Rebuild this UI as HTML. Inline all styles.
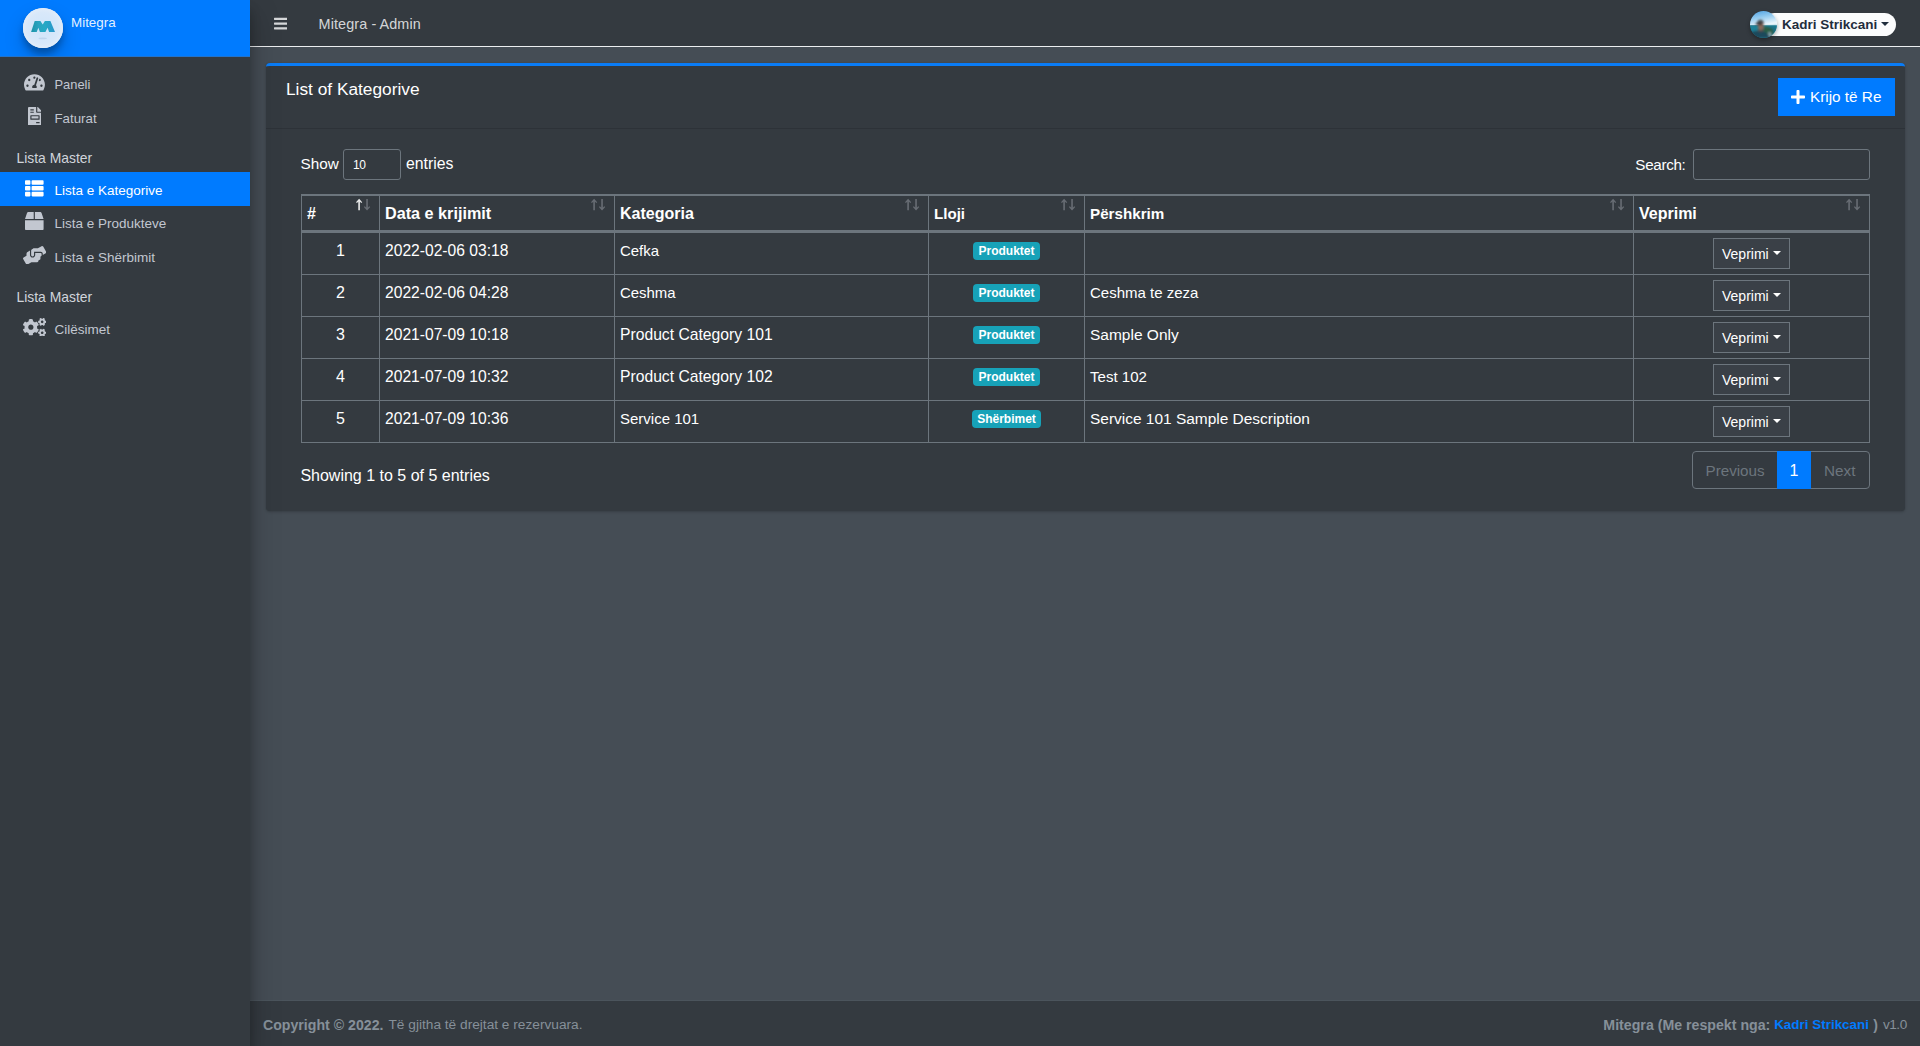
<!DOCTYPE html>
<html lang="en">
<head>
<meta charset="utf-8">
<title>Mitegra - Admin</title>
<style>
*{box-sizing:border-box;margin:0;padding:0}
html,body{width:1920px;height:1046px;overflow:hidden}
body{font-family:"Liberation Sans",sans-serif;background:#454d55;color:#fff;font-size:16px;position:relative}
svg{display:block}
.abs{position:absolute}
/* ---------- sidebar ---------- */
#sidebar{position:absolute;left:0;top:0;width:250px;height:1046px;background:#343a40;box-shadow:0 14px 28px rgba(0,0,0,.25),0 10px 10px rgba(0,0,0,.22);z-index:5}
#brand{position:absolute;left:0;top:0;width:250px;height:57px;background:#007bff;overflow:hidden;border-bottom:1px solid #2273cc}
#logo{position:absolute;left:23px;top:8px;width:40px;height:40px;border-radius:50%;background:#dfeaf6;box-shadow:0 10px 20px rgba(0,0,0,.19),0 6px 6px rgba(0,0,0,.23);overflow:hidden}
#brandtxt{position:absolute;left:71px;top:14.4px;font-size:13.4px;line-height:18px;color:rgba(255,255,255,.9);white-space:nowrap}
.nav{position:absolute;left:0;width:250px;height:34px;color:#c2c7d0;font-size:13.5px;line-height:34px;white-space:nowrap}
.nav .ic{position:absolute;left:22px;top:5.85px;width:25px;height:18.6px;display:flex;align-items:center;justify-content:center}
.nav .ic svg{fill:#c2c7d0}
.nav .tx{position:absolute;left:54.5px;top:0}
.nav.active{background:#007bff;color:#fff}
.nav.active .ic svg{fill:#fff}
.navh{position:absolute;left:16.5px;color:#d0d4db;font-size:13.9px;line-height:20px;white-space:nowrap}
/* ---------- navbar ---------- */
#navbar{position:absolute;left:250px;top:0;width:1670px;height:47px;background:#343a40;border-bottom:1px solid #eceef0;z-index:2}
#bars{position:absolute;left:23.7px;top:15.9px}
#navtitle{position:absolute;left:68.6px;top:14.3px;letter-spacing:0.1px;font-size:14.4px;line-height:20px;color:rgba(255,255,255,.8);white-space:nowrap}
#userpill{position:absolute;left:1513px;top:13px;width:133px;height:23px;border-radius:12px;background:#fbfcfd}
#avatar{position:absolute;left:1500px;top:11px;width:27px;height:27px;border-radius:50%;overflow:hidden;box-shadow:0 2px 4px rgba(0,0,0,.35)}
#username{position:absolute;left:1532px;top:14.5px;font-size:13.5px;line-height:20px;font-weight:bold;color:#1f2d3d;white-space:nowrap}
#usercaret{position:absolute;left:1631px;top:22px;width:0;height:0;border-left:4px solid transparent;border-right:4px solid transparent;border-top:4px solid #1f2d3d}
/* ---------- card ---------- */
#card{position:absolute;left:266px;top:63px;width:1639px;height:448px;background:#343a40;border-top:3px solid #0a7cf6;border-radius:4px;box-shadow:0 0 1px rgba(0,0,0,.125),0 1px 3px rgba(0,0,0,.2)}
#cardhead{position:absolute;left:0;top:0;width:1639px;height:63px;border-bottom:1px solid rgba(0,0,0,.125)}
#cardtitle{position:absolute;left:20px;top:11.4px;font-size:17.3px;line-height:24px;white-space:nowrap}
#btnnew{position:absolute;left:1512px;top:12px;width:117px;height:38px;background:#007bff;border:1px solid #007bff;color:#fff;font-size:16px;line-height:36px;white-space:nowrap}
#btnnew svg{position:absolute;left:12px;top:10px;fill:#fff}
#btnnew span{position:absolute;left:31px;top:-0.2px;font-size:15.3px}
/* ---------- table controls ---------- */
.lbl{position:absolute;font-size:16px;line-height:24px;white-space:nowrap;color:#fff}
.inp{position:absolute;height:31px;border:1px solid #6c757d;border-radius:3px;background:#343a40}
/* ---------- table ---------- */
#tbl{position:absolute;left:301px;top:194px;width:1569px;height:249px;border:1px solid #6c757d;border-right:0;border-collapse:separate;border-spacing:0;table-layout:fixed;font-size:16px;line-height:24px;color:#fff}
#tbl th,#tbl td{border:1px solid #6c757d;border-left:0;border-bottom:0;padding:5px;vertical-align:top;text-align:left;white-space:nowrap;overflow:hidden;position:relative}
#tbl th{border-bottom:2px solid #6c757d;font-weight:bold;vertical-align:bottom;height:37px;padding-top:6px;padding-bottom:4px}
#tbl td{height:42px;padding-top:6px;padding-bottom:4px}
#tbl td.b{padding-top:4.8px}
#tbl td.a{padding-top:5px}
#tbl .c{text-align:center}
.badge{display:inline-block;background:#17a2b8;color:#fff;font-weight:bold;font-size:12px;line-height:12px;padding:3px 5px;border-radius:4px;vertical-align:baseline}
.act{display:inline-block;width:77px;height:31px;border:1px solid #6c757d;background:#3a4047;color:#fff;font-size:14px;line-height:31px;text-align:left;padding-left:8px;position:relative;vertical-align:top}
.act i{position:absolute;left:59px;top:12.4px;width:0;height:0;border-left:4px solid transparent;border-right:4px solid transparent;border-top:4px solid #fff}
.srt{position:absolute;top:2px;right:8px;width:16px;height:14px}
/* ---------- pagination ---------- */
#pag{position:absolute;left:1692px;top:451px;width:178px;height:38px;border:1px solid #6c757d;border-radius:4px;font-size:16px;line-height:36px;color:#6c757d}
#pag .cur{position:absolute;left:84px;top:-1px;width:34px;height:38px;background:#007bff;color:#fff;text-align:center;line-height:40px}
/* ---------- footer ---------- */
#footer{position:absolute;left:250px;top:1000px;width:1670px;height:46px;background:#343a40;border-top:1px solid #4b545c;color:#869099;font-size:14px;line-height:20px}
#footer a{color:#007bff;text-decoration:none;font-weight:bold}
#fl{position:absolute;left:13px;top:14px;white-space:nowrap}
#fr{position:absolute;right:13px;top:14px;white-space:nowrap}
</style>
</head>
<body>

<!-- SIDEBAR -->
<div id="sidebar">
  <div id="brand">
    <div id="logo"><svg width="40" height="40" viewBox="0 0 40 40">
<defs><radialGradient id="lg0" cx="50%" cy="50%" r="55%"><stop offset="0" stop-color="#d0e5fa"/><stop offset="0.7" stop-color="#d8e8fa"/><stop offset="1" stop-color="#e6eef8"/></radialGradient>
<linearGradient id="lg1" x1="0" y1="0" x2="1" y2="0"><stop offset="0" stop-color="#1c93a8"/><stop offset="0.3" stop-color="#2aa3bf"/><stop offset="0.55" stop-color="#27a9c4"/><stop offset="1" stop-color="#2a96cc"/></linearGradient>
<filter id="lb" x="-10%" y="-10%" width="120%" height="120%"><feGaussianBlur stdDeviation="0.35"/></filter>
<filter id="lb2" x="-30%" y="-200%" width="160%" height="500%"><feGaussianBlur stdDeviation="0.7"/></filter></defs>
<rect width="40" height="40" fill="url(#lg0)"/>
<ellipse cx="19.7" cy="30.4" rx="4.2" ry="0.8" fill="#a9c6e4" fill-opacity="0.5" filter="url(#lb2)"/>
<path filter="url(#lb)" fill="url(#lg1)" d="M8.1 23.9 L11.7 13 L17.4 13 L19.7 16.4 L21.9 13 L27.4 13 L32 23.9 L26.1 23.900 L24.600 19.700 L22.400 23.900 L16.900 23.900 L15.400 19.700 L13.700 23.900 Z"/>
</svg></div>
    <div id="brandtxt">Mitegra</div>
  </div>
  <div class="nav" style="top:67px"><span class="ic" style="top:5.7px"><svg width="20.93" height="18.6" viewBox="0 0 576 512"><path d="M288 32C128.94 32 0 160.94 0 320c0 52.8 14.25 102.26 39.06 144.8 5.61 9.62 16.3 15.2 27.44 15.2h443c11.14 0 21.83-5.58 27.44-15.2C561.75 422.26 576 372.8 576 320c0-159.06-128.94-288-288-288zm0 64c14.71 0 26.58 10.13 30.32 23.65-1.11 2.26-2.64 4.23-3.45 6.67l-9.22 27.67c-5.13 3.49-10.97 6.01-17.64 6.01-17.67 0-32-14.33-32-32S270.33 96 288 96zM96 384c-17.67 0-32-14.33-32-32s14.33-32 32-32 32 14.33 32 32-14.33 32-32 32zm48-160c-17.67 0-32-14.33-32-32s14.33-32 32-32 32 14.33 32 32-14.33 32-32 32zm246.77-72.41l-61.33 184C343.13 347.33 352 364.54 352 384c0 11.72-3.38 22.55-8.88 32H232.88c-5.5-9.45-8.88-20.28-8.88-32 0-33.94 26.5-61.43 59.9-63.59l61.34-184.01c4.17-12.56 17.73-19.45 30.36-15.17 12.57 4.19 19.35 17.79 15.17 30.36zm14.66 57.2l15.52-46.55c3.47-1.29 7.13-2.23 11.05-2.23 17.67 0 32 14.33 32 32s-14.33 32-32 32c-11.38-.01-20.89-6.28-26.57-15.22zM480 384c-17.67 0-32-14.33-32-32s14.33-32 32-32 32 14.33 32 32-14.33 32-32 32z"/></svg></span><span class="tx" style="font-size:12.9px;top:0.5px">Paneli</span></div>
  <div class="nav" style="top:101px"><span class="ic" style="top:5.7px"><svg width="13.95" height="18.6" viewBox="0 0 384 512"><path d="M288 256H96v64h192v-64zm89-151L279.1 7c-4.5-4.5-10.6-7-17-7H256v128h128v-6.1c0-6.3-2.5-12.4-7-16.9zm-153 31V0H24C10.7 0 0 10.7 0 24v464c0 13.3 10.7 24 24 24h336c13.3 0 24-10.7 24-24V160H248c-13.2 0-24-10.8-24-24zM64 72c0-4.42 3.58-8 8-8h80c4.42 0 8 3.58 8 8v16c0 4.42-3.58 8-8 8H72c-4.42 0-8-3.58-8-8V72zm0 64c0-4.42 3.58-8 8-8h80c4.42 0 8 3.58 8 8v16c0 4.42-3.58 8-8 8H72c-4.42 0-8-3.58-8-8v-16zm256 304c0 4.42-3.58 8-8 8h-80c-4.42 0-8-3.58-8-8v-16c0-4.42 3.58-8 8-8h80c4.42 0 8 3.58 8 8v16zm0-200v96c0 8.84-7.16 16-16 16H80c-8.84 0-16-7.16-16-16v-96c0-8.84 7.16-16 16-16h224c8.84 0 16 7.16 16 16z"/></svg></span><span class="tx" style="font-size:13.3px;top:0.5px">Faturat</span></div>
  <div class="navh" style="top:148px">Lista Master</div>
  <div class="nav active" style="top:172px"><span class="ic" style="top:6.8px"><svg width="18.6" height="18.6" viewBox="0 0 512 512"><path d="M149.333 216v80c0 13.255-10.745 24-24 24H24c-13.255 0-24-10.745-24-24v-80c0-13.255 10.745-24 24-24h101.333c13.255 0 24 10.745 24 24zM0 376v80c0 13.255 10.745 24 24 24h101.333c13.255 0 24-10.745 24-24v-80c0-13.255-10.745-24-24-24H24c-13.255 0-24 10.745-24 24zM125.333 32H24C10.745 32 0 42.745 0 56v80c0 13.255 10.745 24 24 24h101.333c13.255 0 24-10.745 24-24V56c0-13.255-10.745-24-24-24zm80 448H488c13.255 0 24-10.745 24-24v-80c0-13.255-10.745-24-24-24H205.333c-13.255 0-24 10.745-24 24v80c0 13.255 10.745 24 24 24zm-24-424v80c0 13.255 10.745 24 24 24H488c13.255 0 24-10.745 24-24V56c0-13.255-10.745-24-24-24H205.333c-13.255 0-24 10.745-24 24zm24 264H488c13.255 0 24-10.745 24-24v-80c0-13.255-10.745-24-24-24H205.333c-13.255 0-24 10.745-24 24v80c0 13.255 10.745 24 24 24z"/></svg></span><span class="tx" style="top:1.5px">Lista e Kategorive</span></div>
  <div class="nav" style="top:206px"><span class="ic" style="top:5.55px"><svg width="18.6" height="18.6" viewBox="0 0 512 512"><path d="M509.5 184.6L458.9 32.8C452.4 13.2 434.1 0 413.4 0H272v192h238.7c-.4-2.5-.4-5-1.2-7.4zM240 0H98.6c-20.7 0-39 13.2-45.5 32.8L2.5 184.6c-.8 2.4-.8 4.9-1.2 7.4H240V0zM0 224v240c0 26.5 21.5 48 48 48h416c26.5 0 48-21.5 48-48V224H0z"/></svg></span><span class="tx" style="top:0.6px">Lista e Produkteve</span></div>
  <div class="nav" style="top:240px"><span class="ic" style="top:5.9px"><svg width="23.25" height="18.6" viewBox="0 0 640 512"><path d="M488 192H336v56c0 39.7-32.3 72-72 72s-72-32.3-72-72V126.400l-64.900 39C107.800 176.900 96 197.800 96 220.200v47.300l-80 46.200C.7 322.500-4.600 342.100 4.300 357.400l80 138.600c8.800 15.300 28.400 20.500 43.700 11.700L231.400 448H368c35.300 0 64-28.700 64-64h16c17.700 0 32-14.300 32-32v-64h8c13.300 0 24-10.700 24-24v-48c0-13.300-10.700-24-24-24zm147.700-37.400L555.700 16C546.900.7 527.300-4.500 512 4.300L408.600 64H306.400c-12 0-23.700 3.400-33.900 9.700L239 94.600c-9.400 5.800-15 16.100-15 27.100V248c0 22.100 17.900 40 40 40s40-17.900 40-40v-88h184c30.900 0 56 25.100 56 56v28.500l80-46.200c15.300-8.900 20.500-28.400 11.700-43.700z"/></svg></span><span class="tx" style="top:0.5px">Lista e Shërbimit</span></div>
  <div class="navh" style="top:287px">Lista Master</div>
  <div class="nav" style="top:311px"><span class="ic" style="top:6.8px"><svg width="23.25" height="18.6" viewBox="0 0 640 512"><path d="M512.1 191l-8.2 14.300c-3 5.300-9.400 7.500-15.100 5.400-11.800-4.400-22.600-10.700-32.100-18.600-4.600-3.800-5.800-10.500-2.800-15.700l8.200-14.300c-6.900-8-12.300-17.300-15.900-27.400h-16.500c-6 0-11.200-4.300-12.200-10.300-2-12-2.100-24.600 0-37.100 1-6 6.200-10.400 12.200-10.400h16.500c3.600-10.100 9-19.400 15.900-27.400l-8.200-14.300c-3-5.200-1.900-11.900 2.800-15.700 9.500-7.900 20.400-14.200 32.100-18.600 5.700-2.100 12.100.1 15.100 5.400l8.200 14.300c10.500-1.900 21.200-1.900 31.700 0L552 6.300c3-5.300 9.400-7.500 15.100-5.400 11.800 4.400 22.600 10.700 32.100 18.600 4.600 3.800 5.800 10.500 2.800 15.700l-8.200 14.300c6.900 8 12.300 17.300 15.900 27.400h16.500c6 0 11.200 4.300 12.200 10.300 2 12 2.100 24.600 0 37.100-1 6-6.200 10.400-12.200 10.400h-16.500c-3.600 10.100-9 19.400-15.900 27.400l8.200 14.300c3 5.200 1.900 11.900-2.800 15.700-9.500 7.900-20.400 14.200-32.100 18.600-5.700 2.100-12.100-.1-15.100-5.400l-8.200-14.300c-10.400 1.900-21.200 1.900-31.700 0zm-10.500-58.800c38.500 29.600 82.400-14.300 52.800-52.800-38.500-29.700-82.400 14.300-52.800 52.800zM386.300 286.100l33.700 16.800c10.100 5.800 14.500 18.100 10.500 29.100-8.900 24.200-26.400 46.400-42.600 65.800-7.400 8.900-20.200 11.100-30.300 5.300l-29.100-16.800c-16 13.700-34.600 24.600-54.900 31.700v33.600c0 11.600-8.300 21.600-19.700 23.600-24.600 4.200-50.400 4.400-75.900 0-11.500-2-20-11.900-20-23.600V418c-20.300-7.200-38.900-18-54.900-31.700L74 403c-10 5.800-22.900 3.600-30.300-5.300-16.200-19.400-33.300-41.600-42.200-65.700-4-10.900.4-23.200 10.500-29.100l33.300-16.800c-3.900-20.900-3.900-42.400 0-63.400L12 205.800c-10.100-5.800-14.600-18.100-10.500-29 8.900-24.200 26-46.400 42.200-65.800 7.400-8.900 20.200-11.100 30.300-5.300l29.100 16.800c16-13.700 34.600-24.600 54.900-31.700V57.100c0-11.500 8.200-21.500 19.600-23.500 24.600-4.200 50.500-4.400 76-.1 11.500 2 20 11.900 20 23.600v33.600c20.300 7.200 38.900 18 54.900 31.700l29.100-16.800c10-5.800 22.900-3.600 30.300 5.300 16.200 19.400 33.200 41.600 42.100 65.800 4 10.900.1 23.200-10 29.100l-33.700 16.800c3.900 21 3.900 42.500 0 63.500zm-117.600 21.100c59.200-77-28.700-164.900-105.700-105.700-59.200 77 28.700 164.900 105.700 105.700zm243.400 182.700l-8.200 14.300c-3 5.300-9.400 7.500-15.100 5.400-11.800-4.400-22.600-10.700-32.100-18.600-4.600-3.800-5.800-10.500-2.800-15.700l8.200-14.300c-6.900-8-12.300-17.300-15.900-27.400h-16.500c-6 0-11.200-4.300-12.200-10.300-2-12-2.100-24.600 0-37.100 1-6 6.200-10.400 12.200-10.400h16.500c3.600-10.100 9-19.400 15.900-27.400l-8.200-14.300c-3-5.200-1.900-11.900 2.800-15.700 9.500-7.900 20.400-14.200 32.100-18.600 5.700-2.100 12.100.1 15.100 5.400l8.200 14.300c10.500-1.900 21.200-1.900 31.700 0l8.200-14.300c3-5.300 9.400-7.500 15.100-5.400 11.800 4.400 22.600 10.700 32.100 18.600 4.600 3.800 5.800 10.500 2.800 15.700l-8.200 14.300c6.900 8 12.300 17.300 15.900 27.400h16.500c6 0 11.200 4.300 12.200 10.300 2 12 2.100 24.600 0 37.100-1 6-6.200 10.400-12.200 10.400h-16.500c-3.600 10.100-9 19.400-15.900 27.400l8.200 14.300c3 5.200 1.900 11.900-2.800 15.700-9.500 7.900-20.400 14.200-32.100 18.600-5.700 2.100-12.100-.1-15.100-5.400l-8.200-14.300c-10.400 1.900-21.200 1.900-31.700 0zM501.600 431c38.500 29.600 82.400-14.300 52.800-52.800-38.500-29.600-82.400 14.300-52.800 52.800z"/></svg></span><span class="tx" style="top:1.7px">Cilësimet</span></div>
</div>

<!-- NAVBAR -->
<div id="navbar">
  <div id="bars"><svg width="13.39" height="15.3" viewBox="0 0 448 512" fill="#d5d7d9"><path d="M16 132h416c8.837 0 16-7.163 16-16V76c0-8.837-7.163-16-16-16H16C7.163 60 0 67.163 0 76v40c0 8.837 7.163 16 16 16zm0 160h416c8.837 0 16-7.163 16-16v-40c0-8.837-7.163-16-16-16H16c-8.837 0-16 7.163-16 16v40c0 8.837 7.163 16 16 16zm0 160h416c8.837 0 16-7.163 16-16v-40c0-8.837-7.163-16-16-16H16c-8.837 0-16 7.163-16 16v40c0 8.837 7.163 16 16 16z"/></svg></div>
  <div id="navtitle">Mitegra - Admin</div>
  <div id="userpill"></div>
  <div id="avatar"><svg width="27" height="27" viewBox="0 0 27 27">
<defs><linearGradient id="sky" x1="0" y1="0" x2="0.35" y2="1"><stop offset="0" stop-color="#4a9fe2"/><stop offset="0.5" stop-color="#93caef"/><stop offset="1" stop-color="#eaf5fb"/></linearGradient>
<filter id="ab" x="-20%" y="-20%" width="140%" height="140%"><feGaussianBlur stdDeviation="0.85"/></filter></defs>
<rect width="27" height="14.600" fill="url(#sky)"/>
<rect y="14.300" width="27" height="12.700" fill="#1d8198"/>
<g filter="url(#ab)">
<path d="M13 15.800 L27 14.800 L27 27 L13 27 Z" fill="#1b7288"/>
<path d="M13.500 15.800 C17 15 21 16.500 23.500 19 L23.500 24 L13.500 24 Z" fill="#2a5f46"/>
<path d="M0 27 L0 22 C3 20.200 6 19.600 9.500 19.800 C14.500 20.200 18.500 22.200 20.800 27 Z" fill="#1e485b"/>
<path d="M18 21.500 L20.500 20.800 L22 26 L19.500 26.500 Z" fill="#8aa5b0"/>
<ellipse cx="10.800" cy="15.200" rx="2.900" ry="4.300" fill="#876859"/>
<path d="M7 12.600 C6.500 7.300 14.200 7.300 14 12.600 C12 11.200 9 11.200 7 12.600 Z" fill="#3b474c"/>
<rect x="5.600" y="12.100" width="6.600" height="1.700" rx="0.700" fill="#1b1d26"/>
<path d="M8 17.500 C9 20.300 12.200 20.300 13.400 17.500 L13.400 20.400 L8 20.400 Z" fill="#5a4338"/>
</g>
</svg></div>
  <div id="username">Kadri Strikcani</div>
  <div id="usercaret"></div>
</div>

<!-- CARD -->
<div id="card">
  <div id="cardhead">
    <div id="cardtitle">List of Kategorive</div>
    <div id="btnnew"><svg width="14.0" height="16" viewBox="0 0 448 512"><path d="M416 208H272V64c0-17.67-14.33-32-32-32h-32c-17.670 0-32 14.330-32 32v144H32c-17.670 0-32 14.330-32 32v32c0 17.670 14.330 32 32 32h144v144c0 17.670 14.330 32 32 32h32c17.670 0 32-14.330 32-32V304h144c17.670 0 32-14.330 32-32v-32c0-17.670-14.330-32-32-32z"/></svg><span>Krijo të Re</span></div>
  </div>
</div>

<!-- CONTROLS -->
<div class="lbl" id="l-show" style="left:300.5px;top:151.5px;font-size:15.3px">Show</div>
<div class="inp" id="sel" style="left:343px;top:149px;width:58px"><span style="position:absolute;left:9px;top:0;font-size:12px;letter-spacing:-0.5px;line-height:30.5px;color:#fff">10</span></div>
<div class="lbl" id="l-entries" style="left:406px;top:151.5px;font-size:15.8px">entries</div>
<div class="lbl" id="l-search" style="left:1635.3px;top:152.6px;font-size:15.2px;letter-spacing:-0.3px">Search:</div>
<div class="inp" id="search" style="left:1693px;top:149px;width:177px"></div>

<!-- TABLE -->
<table id="tbl">
<colgroup><col style="width:78px"><col style="width:235px"><col style="width:314px"><col style="width:156px"><col style="width:549px"><col style="width:236px"></colgroup>
<thead><tr>
<th>#<svg class="srt" width="16" height="14" viewBox="0 0 16 14"><path d="M4.1 0.8 L7.2 4.2 L6.2 4.9 L4.9 3.5 L4.9 12.2 L3.3 12.2 L3.3 3.5 L2 4.9 L1 4.2 Z" fill="#eceded"/><path d="M12.05 12.4 L8.9 9 L9.9 8.3 L11.25 9.7 L11.25 1 L12.85 1 L12.85 9.7 L14.2 8.300 L15.200 9 Z" fill="#686d74"/></svg></th><th style="font-size:16.2px;padding-top:5.4px;padding-bottom:4.6px">Data e krijimit<svg class="srt" width="16" height="14" viewBox="0 0 16 14"><path d="M4.1 0.8 L7.2 4.2 L6.2 4.9 L4.9 3.5 L4.9 12.2 L3.3 12.2 L3.3 3.5 L2 4.9 L1 4.2 Z" fill="#686d74"/><path d="M12.05 12.4 L8.9 9 L9.9 8.3 L11.25 9.7 L11.25 1 L12.85 1 L12.85 9.7 L14.2 8.300 L15.200 9 Z" fill="#686d74"/></svg></th><th>Kategoria<svg class="srt" width="16" height="14" viewBox="0 0 16 14"><path d="M4.1 0.8 L7.2 4.2 L6.2 4.9 L4.9 3.5 L4.9 12.2 L3.3 12.2 L3.3 3.5 L2 4.9 L1 4.2 Z" fill="#686d74"/><path d="M12.05 12.4 L8.9 9 L9.9 8.3 L11.25 9.7 L11.25 1 L12.85 1 L12.85 9.7 L14.2 8.300 L15.200 9 Z" fill="#686d74"/></svg></th><th style="font-size:15.1px">Lloji<svg class="srt" width="16" height="14" viewBox="0 0 16 14"><path d="M4.1 0.8 L7.2 4.2 L6.2 4.9 L4.9 3.5 L4.9 12.2 L3.3 12.2 L3.3 3.5 L2 4.9 L1 4.2 Z" fill="#686d74"/><path d="M12.05 12.4 L8.9 9 L9.9 8.3 L11.25 9.7 L11.25 1 L12.85 1 L12.85 9.7 L14.2 8.300 L15.200 9 Z" fill="#686d74"/></svg></th><th style="font-size:15.2px">Përshkrim<svg class="srt" width="16" height="14" viewBox="0 0 16 14"><path d="M4.1 0.8 L7.2 4.2 L6.2 4.9 L4.9 3.5 L4.9 12.2 L3.3 12.2 L3.3 3.5 L2 4.9 L1 4.2 Z" fill="#686d74"/><path d="M12.05 12.4 L8.9 9 L9.9 8.3 L11.25 9.7 L11.25 1 L12.85 1 L12.85 9.7 L14.2 8.300 L15.200 9 Z" fill="#686d74"/></svg></th><th>Veprimi<svg class="srt" width="16" height="14" viewBox="0 0 16 14"><path d="M4.1 0.8 L7.2 4.2 L6.2 4.9 L4.9 3.5 L4.9 12.2 L3.3 12.2 L3.3 3.5 L2 4.9 L1 4.2 Z" fill="#686d74"/><path d="M12.05 12.4 L8.9 9 L9.9 8.3 L11.25 9.7 L11.25 1 L12.85 1 L12.85 9.7 L14.2 8.300 L15.200 9 Z" fill="#686d74"/></svg></th>
</tr></thead>
<tbody>
<tr><td class="c">1</td><td><span style="font-size:15.63px">2022-02-06 03:18</span></td><td><span style="font-size:14.95px">Cefka</span></td><td class="c b"><span class="badge">Produktet</span></td><td></td><td class="c a"><span class="act">Veprimi<i></i></span></td></tr>
<tr><td class="c">2</td><td><span style="font-size:15.63px">2022-02-06 04:28</span></td><td><span style="font-size:14.95px">Ceshma</span></td><td class="c b"><span class="badge">Produktet</span></td><td><span style="font-size:15.0px">Ceshma te zeza</span></td><td class="c a"><span class="act">Veprimi<i></i></span></td></tr>
<tr><td class="c">3</td><td><span style="font-size:15.63px">2021-07-09 10:18</span></td><td><span style="font-size:15.7px">Product Category 101</span></td><td class="c b"><span class="badge">Produktet</span></td><td><span style="font-size:15.5px">Sample Only</span></td><td class="c a"><span class="act">Veprimi<i></i></span></td></tr>
<tr><td class="c">4</td><td><span style="font-size:15.63px">2021-07-09 10:32</span></td><td><span style="font-size:15.7px">Product Category 102</span></td><td class="c b"><span class="badge">Produktet</span></td><td><span style="font-size:15.05px">Test 102</span></td><td class="c a"><span class="act">Veprimi<i></i></span></td></tr>
<tr><td class="c">5</td><td><span style="font-size:15.63px">2021-07-09 10:36</span></td><td><span style="font-size:15.0px">Service 101</span></td><td class="c b"><span class="badge">Shërbimet</span></td><td><span style="font-size:15.46px">Service 101 Sample Description</span></td><td class="c a"><span class="act">Veprimi<i></i></span></td></tr>
</tbody>
</table>

<div class="lbl" id="l-info" style="left:300.4px;top:464.1px">Showing 1 to 5 of 5 entries</div>
<div id="pag">
  <span style="position:absolute;left:12.5px;top:1px;font-size:15.2px">Previous</span>
  <span class="cur">1</span>
  <span style="position:absolute;left:131px;top:1px;font-size:15.3px">Next</span>
</div>

<!-- FOOTER -->
<div id="footer">
  <div id="fl"><b style="font-size:14.15px">Copyright © 2022.</b><span style="position:absolute;left:125.5px;top:0;font-size:13.7px">Të gjitha të drejtat e rezervuara.</span></div>
  <div id="fr"><b style="position:absolute;right:136.7px;top:0;font-size:14.18px">Mitegra (Me respekt nga:</b><a style="position:absolute;right:38px;top:0;font-size:13.45px">Kadri Strikcani</a><b style="position:absolute;right:29px;top:0">)</b><span style="position:absolute;right:0.3px;top:0;font-size:13.6px;letter-spacing:-0.5px">v1.0</span></div>
</div>

</body>
</html>
